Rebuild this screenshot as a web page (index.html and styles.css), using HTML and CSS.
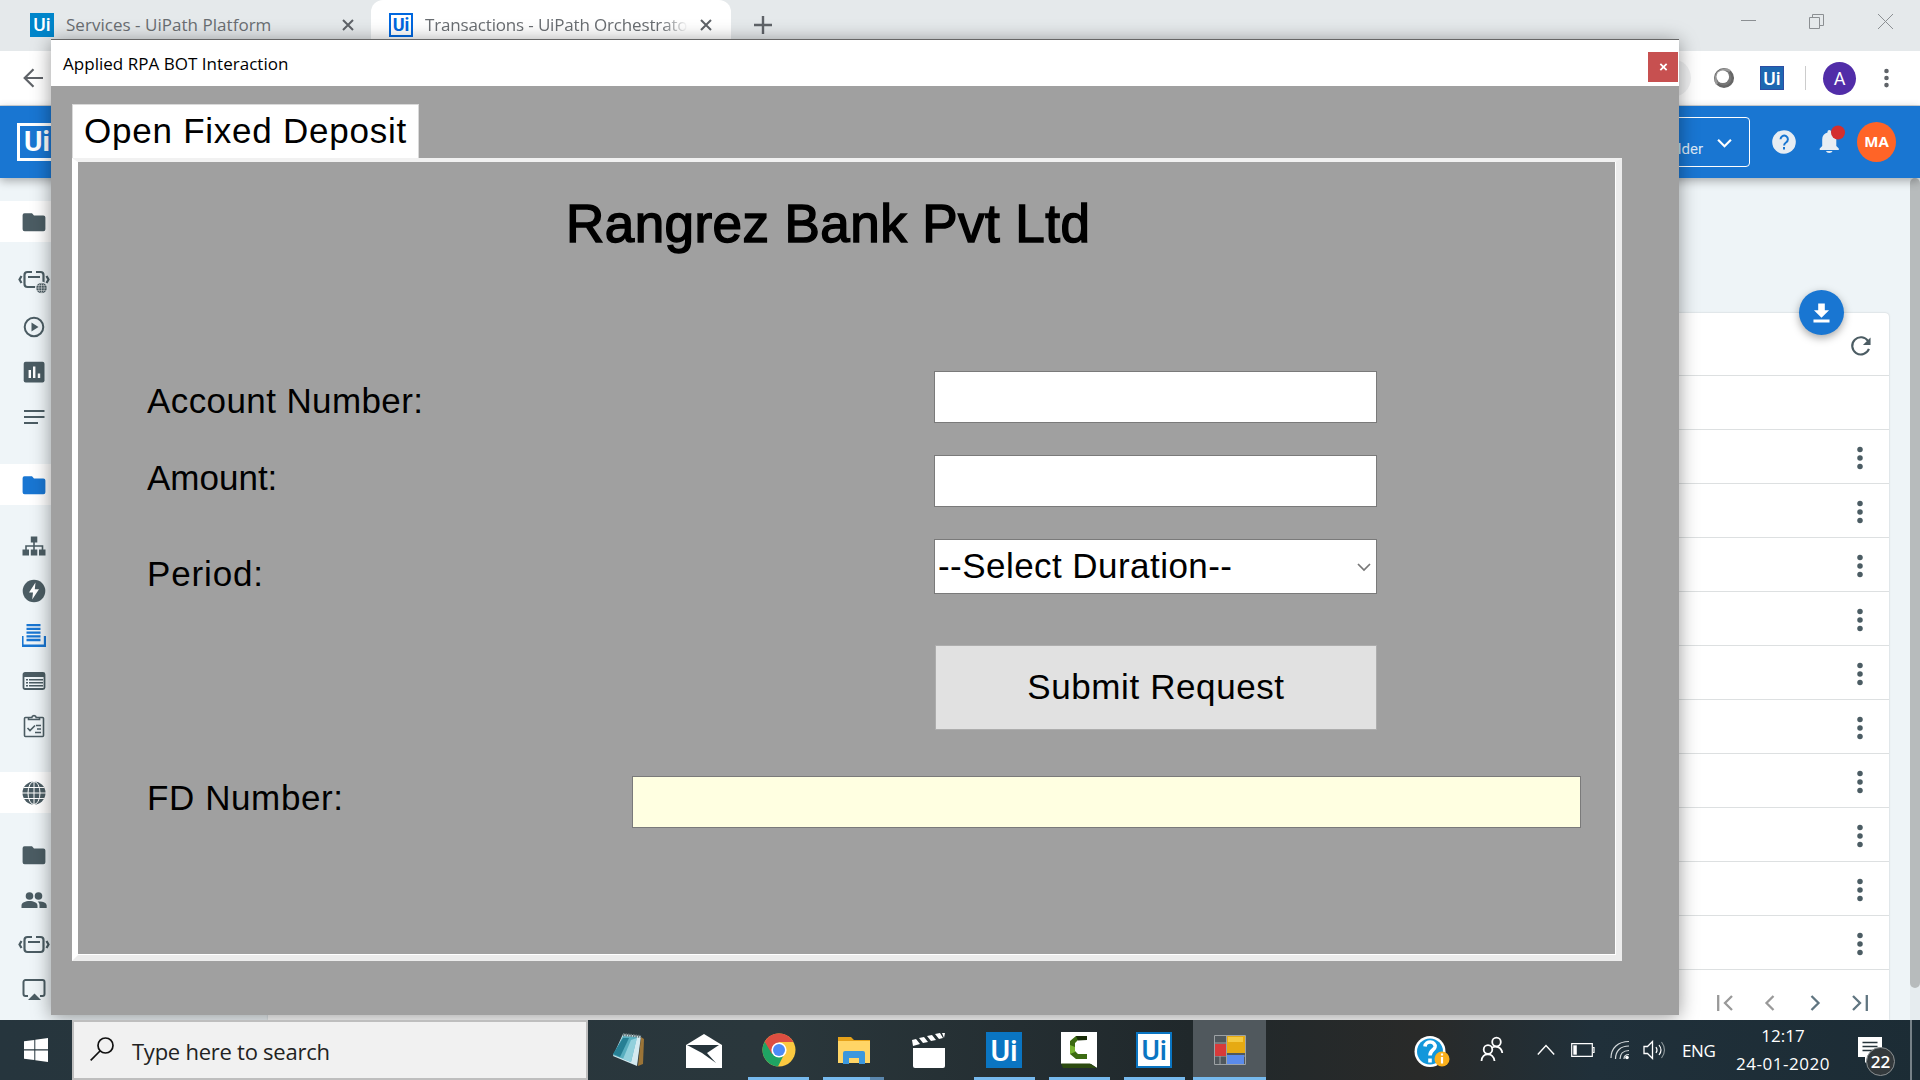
FILE: index.html
```
<!DOCTYPE html>
<html lang="en">
<head>
<meta charset="utf-8">
<title>Applied RPA BOT Interaction</title>
<link rel="stylesheet" href="styles.css">
</head>
<body>
<svg class="sprite" aria-hidden="true">
  <symbol id="folder" viewBox="0 0 24 24"><path d="M10 3.300H2.500A2 2 0 0 0 .6 5.300v14a2 2 0 0 0 2 2h18.800a2 2 0 0 0 2-2V7.500a2 2 0 0 0-2-2H12z"/></symbol>
  <symbol id="robot" viewBox="0 0 32 24"><g fill="none" stroke="currentColor" stroke-width="2.200"><path d="M14 4H9.500a3 3 0 0 0-3 3v9a3 3 0 0 0 3 3h13a3 3 0 0 0 3-3V7a3 3 0 0 0-3-3H18M10 9h12M3.500 8 1.500 11.500l2 3.500M28.500 8l2 3.500-2 3.500"/></g></symbol>
  <symbol id="globe" viewBox="0 0 24 24"><circle cx="12" cy="12" r="11.500"/><path d="M0 12h24M12 0v24M2 6.500h20M2 17.500h20" stroke="#fff" stroke-width="1" fill="none"/><ellipse cx="12" cy="12" rx="6" ry="11.500" fill="none" stroke="#fff"/></symbol>
  <symbol id="dots" viewBox="0 0 6 24"><circle cx="3" cy="3.500" r="2.750"/><circle cx="3" cy="12" r="2.750"/><circle cx="3" cy="20.500" r="2.750"/></symbol>
</svg>

<div class="browser">
  <div class="tabs">
    <div class="tab">
      <span class="ui ui-tab">Ui</span><span class="tab-title t1">Services - UiPath Platform</span>
      <svg class="x" viewBox="0 0 12 12"><path d="M1 1l10 10M11 1L1 11"/></svg>
    </div>
    <div class="tab active">
      <span class="ui ui-line">Ui</span><span class="tab-title t2">Transactions - UiPath Orchestrato</span>
      <svg class="x" viewBox="0 0 12 12"><path d="M1 1l10 10M11 1L1 11"/></svg>
    </div>
    <svg class="plus" viewBox="0 0 18 18"><path d="M9 0v18M0 9h18"/></svg>
    <svg class="winctl" viewBox="0 0 160 20"><path d="M4 9.500h15M72.500 6.500h10v11h-10zM75.500 6.500v-3h11v11h-4M141 3l15 15M156 3l-15 15"/></svg>
  </div>
  <div class="address">
    <svg class="back" viewBox="0 0 20 20"><path d="M20 10H2M10.500 1.300L1.700 10l8.800 8.700"/></svg>
    <span class="omni"></span>
    <svg class="orb" viewBox="0 0 22 22"><circle cx="11" cy="11" r="8.800" fill="#777" stroke="#666" stroke-width="2.500"/><path d="M4 17A9.500 9.500 0 0 1 17 4" fill="none" stroke="#999" stroke-width="2.500"/><circle cx="9.800" cy="9.800" r="6.300" fill="#fff"/></svg>
    <span class="ui ui-ext">Ui</span><i class="vline"></i><span class="avatar">A</span>
    <svg class="menu" viewBox="0 0 6 24"><use href="#dots"/></svg>
  </div>
  <div class="appbar">
    <span class="logo">Ui</span>
    <div class="tenant"><span>lder</span><svg viewBox="0 0 14 10"><path d="M1 1.500l6 6 6-6"/></svg></div>
    <svg class="help" viewBox="0 0 24 24"><circle cx="12" cy="12" r="11.800" fill="#e7edf3"/><path d="M8.500 9.200a3.700 3.700 0 1 1 5.500 3.300c-1.500 1-1.900 1.500-1.900 3M12 17v2.500" fill="none" stroke="#1976d2" stroke-width="2"/></svg>
    <svg class="bell" viewBox="0 0 28 30"><path d="M10.500 7.500V6.800a1.800 1.800 0 0 1 3.600 0v.7c3.500.9 5.200 3.600 5.200 7v6.500l2.500 2.500V25H2.700v-1.500L5.200 21v-6.500c0-3.400 1.800-6.100 5.300-7zM9 26h6.500c-.6 2.600-5.900 2.600-6.500 0z" fill="#e7edf3"/><circle cx="21" cy="7.500" r="7" fill="#d32f2f"/></svg>
    <span class="user">MA</span>
  </div>
  <div class="page">
    <div class="side">
      <div class="band"><svg><use href="#folder"/></svg></div>
      <div class="items">
        <div><svg class="wide" viewBox="0 0 32 24"><use href="#robot" width="32" height="24" y="-2"/><circle cx="23.500" cy="18" r="6.500" fill="#eff5f8"/><use href="#globe" x="18" y="12.500" width="11" height="11"/></svg></div>
        <div><svg viewBox="0 0 24 24"><circle cx="12" cy="12" r="9.300" fill="none" stroke="currentColor" stroke-width="2"/><path d="M9.500 7.500v9l7-4.500z"/></svg></div>
        <div><svg viewBox="0 0 24 24"><rect x="1.700" y="1.700" width="20.800" height="20.800" rx="2"/><path d="M7.800 18V10M12.200 18V6.500M17 18v-4.500" stroke="#fff" stroke-width="2.400"/></svg></div>
        <div><svg viewBox="0 0 24 24"><path d="M2 6h20.500M2 12h20.500M2 18h14" stroke="currentColor" stroke-width="2"/></svg></div>
      </div>
      <div class="band blue"><svg><use href="#folder"/></svg></div>
      <div class="items mid">
        <div><svg viewBox="0 0 24 24"><path d="M8.800 2.500h6.500v6H8.800zM.5 15.500H7v6H.5zM8.800 15.500h6.500v6H8.800zM17 15.500h6.500v6H17z"/><path d="M12 8v8M4 16v-4h16.500v4" fill="none" stroke="currentColor" stroke-width="1.600"/></svg></div>
        <div><svg viewBox="0 0 24 24"><circle cx="12" cy="12" r="11.300"/><path d="M13.500 3.500L7 13.500h4l-.8 7L17 10.300h-4.200z" fill="#fff"/></svg></div>
        <div class="blue stack"><svg viewBox="0 0 24 24"><path d="M4.500 1.200h14M4.500 4.900h14M4.500 8.600h14M4.500 12.300h14M4.500 16h14" stroke="currentColor" stroke-width="2.300"/><path d="M.3 12v9.700h22.800V12" fill="none" stroke="currentColor" stroke-width="2.500"/></svg></div>
        <div><svg viewBox="0 0 24 24"><rect x="1.500" y="4" width="21" height="16" rx="1.500" fill="none" stroke="currentColor" stroke-width="1.800"/><path d="M1 4h22v4H1zM4 10h2v1.500H4zM4 13h2v1.500H4zM4 16h2v1.500H4zM7 10h14v1.500H7zM7 13h14v1.500H7zM7 16h14v1.500H7z"/></svg></div>
        <div><svg viewBox="0 0 24 24"><path d="M7 3.500H3.500a1 1 0 0 0-1 1v17a1 1 0 0 0 1 1h17a1 1 0 0 0 1-1v-17a1 1 0 0 0-1-1H17M6.500 5.500h11v-2h-3.300c-.4-2.500-4-2.500-4.400 0H6.500zM5.500 14l2.500 2.500 5-5M14 11.500h5M15 15h4M13 18.500h6" fill="none" stroke="currentColor" stroke-width="1.600"/></svg></div>
      </div>
      <div class="band"><svg><use href="#globe"/></svg></div>
      <div class="items last">
        <div><svg><use href="#folder"/></svg></div>
        <div><svg class="wide" viewBox="0 0 32 24"><circle cx="11.500" cy="8" r="3.800"/><circle cx="20.500" cy="8" r="3.800"/><path d="M3.500 20v-2.500c0-6 16-6 16 0V20zM21.500 20v-3c0-1.500-.8-2.700-1.800-3.500 4-.5 9 .8 9 4V20z"/></svg></div>
        <div><svg class="wide" viewBox="0 0 32 24"><use href="#robot"/></svg></div>
        <div><svg viewBox="0 0 24 24"><path d="M6 18H3.500a2 2 0 0 1-2-2V4a2 2 0 0 1 2-2h17a2 2 0 0 1 2 2v12a2 2 0 0 1-2 2H18" fill="none" stroke="currentColor" stroke-width="2"/><path d="M12.500 15.500L19 22H6z"/></svg></div>
      </div>
    </div>
    <div class="content">
      <div class="card">
        <div class="toolbar"><svg viewBox="0 0 24 24"><path d="M20 6.500A9 9 0 1 0 20.800 14.500" fill="none" stroke="currentColor" stroke-width="2.200"/><path d="M22.500 2.500v8h-8z"/></svg></div>
        <div class="row"></div>
        <div class="row"><svg><use href="#dots"/></svg></div>
        <div class="row"><svg><use href="#dots"/></svg></div>
        <div class="row"><svg><use href="#dots"/></svg></div>
        <div class="row"><svg><use href="#dots"/></svg></div>
        <div class="row"><svg><use href="#dots"/></svg></div>
        <div class="row"><svg><use href="#dots"/></svg></div>
        <div class="row"><svg><use href="#dots"/></svg></div>
        <div class="row"><svg><use href="#dots"/></svg></div>
        <div class="row"><svg><use href="#dots"/></svg></div>
        <div class="row"><svg><use href="#dots"/></svg></div>
        <div class="pager">
          <svg class="off" viewBox="0 0 18 18"><path d="M2.200 1v16M16 2L9 9l7 7"/></svg>
          <svg class="off" viewBox="0 0 18 18"><path d="M12.500 2l-7 7 7 7"/></svg>
          <svg viewBox="0 0 18 18"><path d="M5.500 2l7 7-7 7"/></svg>
          <svg viewBox="0 0 18 18"><path d="M2 2l7 7-7 7M15.800 1v16"/></svg>
        </div>
        <span class="fab"><svg viewBox="0 0 18 20"><path d="M5.500 0h7v7H17l-8 8-8-8h4.500zM.5 17h17v3H.5z" fill="#fff"/></svg></span>
      </div>
    </div>
    <div class="scroll"><i></i></div>
  </div>
</div>

<div class="window">
  <div class="titlebar"><span>Applied RPA BOT Interaction</span><b class="close"><svg viewBox="0 0 10 8"><path d="M1.500.5l7 7M8.500.5l-7 7"/></svg></b></div>
  <div class="client">
    <div class="ftab"><span>Open Fixed Deposit</span></div>
    <div class="panel">
      <h1><span>Rangrez Bank Pvt Ltd</span></h1>
      <div class="frow r1"><label>Account Number:</label><div class="box"></div></div>
      <div class="frow r2"><label>Amount:</label><div class="box"></div></div>
      <div class="frow r3"><label>Period:</label><div class="box select"><span>--Select Duration--</span><svg viewBox="0 0 14 9"><path d="M1 1l6 6 6-6"/></svg></div></div>
      <div class="frow r4"><button><span>Submit Request</span></button></div>
      <div class="frow r5"><label>FD Number:</label><div class="box out"></div></div>
    </div>
  </div>
</div>

<div class="taskbar">
  <div class="start"><svg viewBox="0 0 24 24"><path d="M0 3.300L10.300 2v9.300H0zM11.300 1.800L24 0v11.300H11.300zM0 12.500h10.300V22L0 20.700zM11.300 12.500H24V24l-12.700-1.800z" fill="#fff"/></svg></div>
  <div class="search"><svg viewBox="0 0 24 24"><circle cx="15.500" cy="8.500" r="7.500"/><path d="M10 14L.7 23.300"/></svg><span>Type here to search</span></div>
  <div class="apps">
    <div><svg viewBox="0 0 36 36"><path d="M30 5l3 2-1 25-5 2z" fill="#9b7437"/><path d="M12 2l18 2-4 30L2 24z" fill="#d5eaf0"/><path d="M12 4l14 1-6 25L2 23z" fill="#58aebf"/><path d="M12 6l6 0-9 19-7-3z" fill="#267f94"/><path d="M20 8l6-2-6 24-8-3z" fill="#92d0dc"/><path d="M12 2.500l18 2" stroke="#68777a" stroke-width="3" stroke-dasharray="1.500 1"/></svg></div>
    <div><svg viewBox="0 0 36 36"><path d="M0 13L18 2l18 11v25H0z" fill="#fff"/><path d="M1 13h32l-12 8 9 10-14-10z" fill="#26343b"/></svg></div>
    <div class="run"><svg viewBox="0 0 36 36"><circle cx="18" cy="18" r="16.500" fill="#fbc940"/><path d="M18 18L3.700 9.700A16.500 16.500 0 0 0 17 34.500l6-12z" fill="#1fa463"/><path d="M3.700 9.700A16.500 16.500 0 0 1 32.500 10H18l-7 12z" fill="#dc4e41"/><circle cx="18" cy="18" r="7.600" fill="#fff"/><circle cx="18" cy="18" r="6" fill="#4c8bf5"/></svg></div>
    <div class="run more"><svg viewBox="0 0 36 36"><path d="M2 5h13l3 3h16v6H2z" fill="#e6a21a"/><path d="M2 9h32v22H2z" fill="#ffd566"/><path d="M7 32V21a2 2 0 0 1 2-2h18a2 2 0 0 1 2 2v11h-6v-6H13v6z" fill="#3b97dd"/></svg></div>
    <div><svg viewBox="0 0 36 36"><path d="M2 16h32v18a2 2 0 0 1-2 2H4a2 2 0 0 1-2-2z" fill="#fff"/><path d="M1 8l4-1 4 5-7 2zM8 6l5-1 4 5-5 1zM16 4l5-1 4 5-5 1zM24 2l5-1 3 5-4 1zM31 1l3 0-1 5z" fill="#fff"/></svg></div>
    <div class="run"><span class="ui ui-task">Ui</span></div>
    <div class="run"><svg viewBox="0 0 36 36"><path d="M0 0h36v36l-6-4H0z" fill="#fff"/><path d="M0 31.500h29l7 4.500H2z" fill="#2c4a10"/><path d="M26 4H15L9 9v13l6 5h11v-5h-9l-3-3v-8l3-3h9z" fill="#3c6b12"/><path d="M15 4h11v4l-9 .5z" fill="#182c08"/><path d="M9 13l5 2v5l-5 2z" fill="#79b533"/></svg></div>
    <div class="run"><span class="ui ui-task inv">Ui</span></div>
    <div class="run current"><svg viewBox="0 0 36 36"><path d="M2.500 3.500h31v29h-31zM2.500 11h31M2.500 24h31M14.500 3.500v29M8 24v9" fill="none" stroke="#9da2a5" stroke-width="1"/><path d="M3 12h11v12H3z" fill="#d83a3a"/><path d="M15 4h18v17H15z" fill="#e6aa12"/><path d="M15 23h17v9H15z" fill="#5b8bea"/><path d="M16 5h15v5H16z" fill="#f4ca42"/></svg></div>
  </div>
  <div class="tray">
    <svg class="t-help" viewBox="0 0 36 34"><circle cx="16" cy="16.500" r="15.500" fill="#fff"/><circle cx="16" cy="16.500" r="13" fill="#1297db"/><path d="M11 11.500c.5-6.500 11-5.500 10 .5-.6 3-5 3.500-5 8.500M16 23.500v4" fill="none" stroke="#fff" stroke-width="3.600"/><circle cx="28" cy="24" r="7.500" fill="#fbb01c"/><path d="M28 22v6.500M28 18.500v2" stroke="#fff" stroke-width="2.200"/></svg>
    <svg class="t-people" viewBox="0 0 24 26"><g fill="none" stroke="#fff" stroke-width="1.800"><circle cx="16.500" cy="6" r="4.300"/><circle cx="8" cy="13.500" r="4.300"/><path d="M1.500 25c.5-9 12-9 13 0M11.500 12c4-3 10-1 10.800 5"/></g></svg>
    <svg class="t-up" viewBox="0 0 18 12"><path d="M.8 10.500L9 1.500l8.200 9" fill="none" stroke="#fff" stroke-width="1.400"/></svg>
    <svg class="t-bat" viewBox="0 0 24 14"><path d="M.7.700h20.600v12.600H.7zM22 4.500h1v5h-1" fill="none" stroke="#fff" stroke-width="1.200"/><path d="M2.300 2.300h3.500v9.400H2.300z" fill="#fff"/></svg>
    <svg class="t-wifi" viewBox="0 0 20 20"><g fill="none" stroke="#d5dadc" stroke-width="1.200"><path d="M1 18C1 8 8 1.500 19 1.500M5.500 19c0-8 5-13 13.500-13M10 19c0-5 3-8.500 9-8.500M14 19c0-3 2-4.500 5-4.500"/></g><circle cx="17" cy="17.500" r="1.800" fill="#fff"/></svg>
    <svg class="t-vol" viewBox="0 0 24 20"><path d="M1 6.500h3.500L9.500 1.500v17l-5-5H1z" fill="none" stroke="#fff" stroke-width="1.300"/><path d="M13 7q2 3 0 6M16 5q4 5 0 10" fill="none" stroke="#fff" stroke-width="1.200"/><path d="M18.500 2q6 8 0 16" fill="none" stroke="#8a9498" stroke-width="1.200"/></svg>
    <span class="lang">ENG</span>
    <div class="clock"><span>12:17</span><span class="date">24-01-2020</span></div>
    <div class="note"><svg viewBox="0 0 24 26"><path d="M0 0h24v20H13l-6 6v-6H0z" fill="#fff"/><path d="M4.500 5.500h15M4.500 9.500h15M4.500 13.500h11" stroke="#26343b" stroke-width="1.300"/></svg><b>22</b></div>
    <i class="peek"></i>
  </div>
</div>
</body>
</html>
```
FILE: styles.css
```
* { box-sizing: border-box; }
body { margin: 0; width: 1920px; height: 1080px; overflow: hidden; position: relative; font-family: "Open Sans", "Noto Sans", sans-serif; }
svg { display: block; flex: none; }
.sprite { position: absolute; width: 0; height: 0; }
span { white-space: nowrap; }

/* browser chrome */
.browser { height: 1020px; display: flex; flex-direction: column; }
.tabs { height: 51px; background: #e5e9eb; display: flex; flex: none; }
.tab { width: 371px; height: 51px; padding: 0 16px 2px 30px; display: flex; align-items: center; }
.tab.active { width: 360px; background: #fff; border-radius: 12px 12px 0 0; padding: 0 18px 2px 18px; }
.tab-title { margin-left: 12px; font-size: 17px; color: #6a6e72; overflow: hidden; }
.t1 { width: 276px; letter-spacing: .03px; }
.t2 { width: 263px; letter-spacing: -.16px; -webkit-mask-image: linear-gradient(90deg, #000 90%, transparent); mask-image: linear-gradient(90deg, #000 90%, transparent); }
.x { width: 12px; height: 12px; fill: none; stroke: #5f6368; stroke-width: 2; }
.active .x { margin-left: 12px; }
.plus { width: 18px; height: 18px; margin: 16px 0 0 23px; fill: none; stroke: #5f6368; stroke-width: 2.400; }
.winctl { width: 160px; height: 20px; margin: 11px 23px 0 auto; fill: none; stroke: #8b8f92; stroke-width: 1; }
.ui { display: flex; align-items: center; justify-content: center; font-family: Roboto, sans-serif; font-weight: 500; color: #fff; flex: none; }
.ui-tab, .ui-line, .ui-ext { width: 24px; height: 24px; font-size: 19px; }
.ui-tab { background: #0085ca; }
.ui-line { border: 2px solid #0067df; color: #0067df; background: #fff; font-weight: 700; font-size: 18px; }
.ui-ext { background: #1d67b1; border: 1px solid #2c4da3; }
.address { height: 55px; background: #fff; border-bottom: 1px solid #d3d7da; flex: none; display: flex; align-items: center; }
.back { width: 20px; height: 20px; margin-left: 23px; fill: none; stroke: #5f6368; stroke-width: 2.200; }
.omni { width: 1640px; height: 38px; border-radius: 19px; background: #f0f1f2; margin-left: 8px; }
.orb { width: 22px; height: 22px; margin-left: 22px; }
.ui-ext { margin-left: 25px; }
.vline { width: 1px; height: 24px; background: #ccc; margin-left: 21px; }
.avatar { width: 33px; height: 33px; border-radius: 50%; background: #512da8; color: #fff; font: 18px Roboto, sans-serif; line-height: 34px; text-align: center; margin-left: 17px; }
.menu { width: 5px; height: 20px; fill: #5f6368; margin-left: 28px; }
.appbar { height: 72px; background: #1976d2; flex: none; display: flex; align-items: center; position: relative; z-index: 1; box-shadow: 0 3px 9px rgba(0,0,0,.3); }
.logo { width: 40px; height: 38px; margin-left: 17px; border: 3px solid #fff; color: #fff; font: 700 28px/32px Roboto, sans-serif; text-align: center; }
.tenant { width: 193px; height: 50px; border: 1px solid #fff; border-radius: 4px; margin-left: 1500px; display: flex; justify-content: flex-end; padding: 20px 17px 0 0; color: #dce9f7; font: 15px/22px Roboto, sans-serif; }
.tenant svg { width: 15px; height: 11px; margin: 0 0 0 14px; fill: none; stroke: #fff; stroke-width: 2; }
.help { width: 24px; height: 24px; margin-left: 22px; }
.bell { width: 28px; height: 30px; margin: -5px 0 0 21px; }
.user { width: 39px; height: 40px; border-radius: 50%; background: #ff6427; color: #fff; font: 700 15px/39px "Open Sans", sans-serif; text-align: center; margin-left: 12px; }

/* orchestrator page */
.page { flex: 1; display: flex; background: #eef4f7; min-height: 0; }
.side { width: 268px; padding-top: 23px; background: #eff5f8; color: #4b5c63; }
.side svg { width: 24px; height: 24px; fill: currentColor; }
.side svg.wide { width: 32px; margin-left: -4px; }
.band { height: 41px; padding-left: 22px; background: #fff; display: flex; align-items: center; }
.items { padding: 17px 0 25px 22px; }
.items.mid { padding: 18px 0 24px 22px; }
.items.last { padding-top: 19px; }
.items > div { height: 45px; display: flex; align-items: center; }
.side .blue { color: #1976d2; }
.content { flex: 1; padding: 135px 21px 0 0; }
.card { height: 707px; background: #fff; border-radius: 4px 4px 0 0; box-shadow: 0 0 2px rgba(0,0,0,.2); color: #4b5c63; position: relative; }
.card svg { fill: currentColor; }
.toolbar { height: 63px; border-bottom: 1px solid #dde0e1; display: flex; justify-content: flex-end; padding: 22px 17px 0 0; }
.toolbar svg { width: 23px; height: 23px; }
.row { height: 54px; border-bottom: 1px solid #dde0e1; display: flex; justify-content: flex-end; align-items: center; padding: 2px 26px 0 0; }
.row svg { width: 6px; height: 24px; }
.pager { display: flex; justify-content: flex-end; gap: 27px; padding: 24px 20px 0 0; }
.pager svg { width: 18px; height: 18px; fill: none; stroke: #607580; stroke-width: 2.300; }
.pager svg.off { stroke: #999; }
.fab { position: absolute; right: 45px; top: -23px; width: 45px; height: 45px; border-radius: 50%; background: #1976d2; box-shadow: 0 3px 8px rgba(0,0,0,.35); display: flex; align-items: center; justify-content: center; }
.fab svg { width: 17px; height: 20px; }
.scroll { width: 10px; background: #e6ecef; }
.scroll i { display: block; height: 810px; background: #b7bbbc; border-radius: 5px; }

/* form window */
.window { position: absolute; left: 51px; top: 39px; width: 1628px; height: 976px; background: #a0a0a0; border-top: 1px solid #666; box-shadow: 0 2px 18px rgba(0,0,0,.4); display: flex; flex-direction: column; z-index: 2; }
.titlebar { height: 46px; background: #fff; display: flex; justify-content: space-between; padding: 12px 1px 0 12px; color: #000; flex: none; }
.titlebar span { font-size: 17px; line-height: 23px; letter-spacing: .03px; }
.close { width: 30px; height: 30px; background: #c75050; display: flex; align-items: center; justify-content: center; }
.close svg { width: 9px; height: 8px; fill: none; stroke: #fff; stroke-width: 2; }
.client { padding: 18px 57px 0 21px; font-family: "Liberation Sans", Arial, sans-serif; color: #000; font-size: 35px; }
.ftab { width: 347px; height: 54px; background: #fff; border: 1px solid #d9d9d9; border-bottom: 0; padding-left: 11px; line-height: 51px; letter-spacing: .76px; }
.panel { height: 803px; border-style: solid; border-color: #f1f1f1 #ececec #ececec #fff; border-width: 4px 6px 6px 6px; background: #a0a0a0; box-shadow: inset -1px -1px #fff; }
h1 { margin: 32px 0 0 488px; font-weight: 400; font-size: 53px; line-height: 60px; height: 60px; letter-spacing: .44px; -webkit-text-stroke: 1.500px #000; }
.frow { display: flex; justify-content: space-between; padding-left: 69px; padding-right: 239px; }
.frow label { line-height: 40px; }
.box { width: 443px; height: 52px; background: #fff; border: 1px solid #7a7a7a; }
.r1 { margin-top: 117px; }
.r1 label { padding-top: 10px; letter-spacing: .4px; }
.r2 { margin-top: 32px; }
.r2 label { padding-top: 3px; }
.r3 { margin-top: 32px; }
.r3 label { padding-top: 15px; letter-spacing: .85px; }
.select { height: 55px; display: flex; justify-content: space-between; padding: 0 5px 0 3px; line-height: 52px; letter-spacing: .45px; }
.select svg { width: 14px; height: 9px; margin-top: 23px; fill: none; stroke: #777; stroke-width: 1.700; }
.r4 { margin-top: 51px; justify-content: flex-end; }
button { width: 442px; height: 85px; background: #e1e1e1; border: 1px solid #adadad; font: inherit; color: inherit; padding: 0 0 1px; letter-spacing: .6px; }
.r5 { margin-top: 46px; padding-right: 35px; }
.r5 label { padding-top: 2px; letter-spacing: .6px; }
.out { width: 949px; background: #ffffe1; }

/* taskbar */
.taskbar { position: relative; z-index: 3; height: 60px; background: linear-gradient(90deg, #26353d, #2a373c 40%, #20282b 62%, #292a29 74%, #20303a 83%, #1c2c35); display: flex; color: #fff; }
.start { width: 72px; display: flex; align-items: center; padding-left: 24px; }
.start svg { width: 24px; height: 24px; }
.search { width: 516px; background: #f1f1f1; border: 2px solid #bebebe; display: flex; align-items: center; padding-left: 16px; color: #222; font-size: 22px; letter-spacing: -.25px; }
.search svg { width: 24px; height: 24px; margin-top: -2px; fill: none; stroke: #111; stroke-width: 1.700; }
.search span { margin: 1px 0 0 18px; }
.apps { display: flex; padding-left: 3px; }
.apps > div { width: 75.100px; height: 60px; padding-top: 12px; display: flex; justify-content: center; align-items: flex-start; position: relative; }
.apps svg { width: 36px; height: 36px; }
.apps .run { background: linear-gradient(#76b9ed, #76b9ed) center bottom / 61px 3px no-repeat; }
.apps .more { background: linear-gradient(90deg, #76b9ed 47px, #5b87ad 47px) center bottom / 61px 3px no-repeat; }
.apps .current { width: 73px; margin-left: 1.500px; background: linear-gradient(#76b9ed, #76b9ed) center bottom / 100% 3px no-repeat #50585d; }
.ui-task { width: 36px; height: 36px; background: #0a75c2; font-size: 30px; }
.ui-task.inv { background: #fff; color: #0a75c2; border: 2px solid #0a75c2; font-size: 28px; }
.tray { margin-left: auto; width: 506px; display: flex; align-items: center; }
.t-help { width: 36px; height: 34px; margin-top: 4px; }
.t-people { width: 24px; height: 26px; margin: -2px 0 0 30px; }
.t-up { width: 18px; height: 12px; margin-left: 33px; }
.t-bat { width: 24px; height: 14px; margin-left: 16px; }
.t-wifi { width: 20px; height: 20px; margin-left: 15px; }
.t-vol { width: 24px; height: 20px; margin-left: 13px; }
.lang { font-size: 17px; margin-left: 15px; width: 33px; letter-spacing: -.4px; }
.clock { width: 106px; margin-left: 15px; display: flex; flex-direction: column; text-align: center; font-size: 17px; line-height: 28px; }
.date { letter-spacing: .55px; }
.note { width: 40px; height: 44px; margin: 8px 0 0 22px; position: relative; padding-top: 5px; }
.note svg { width: 24px; height: 26px; }
.note b { position: absolute; left: 8px; top: 15px; width: 29px; height: 29px; border-radius: 50%; border: 1px solid #8c9193; background: #33393c; font-size: 17px; font-weight: 600; line-height: 27px; text-align: center; }
.peek { width: 2px; height: 60px; background: #778187; margin-left: 12px; }
```
